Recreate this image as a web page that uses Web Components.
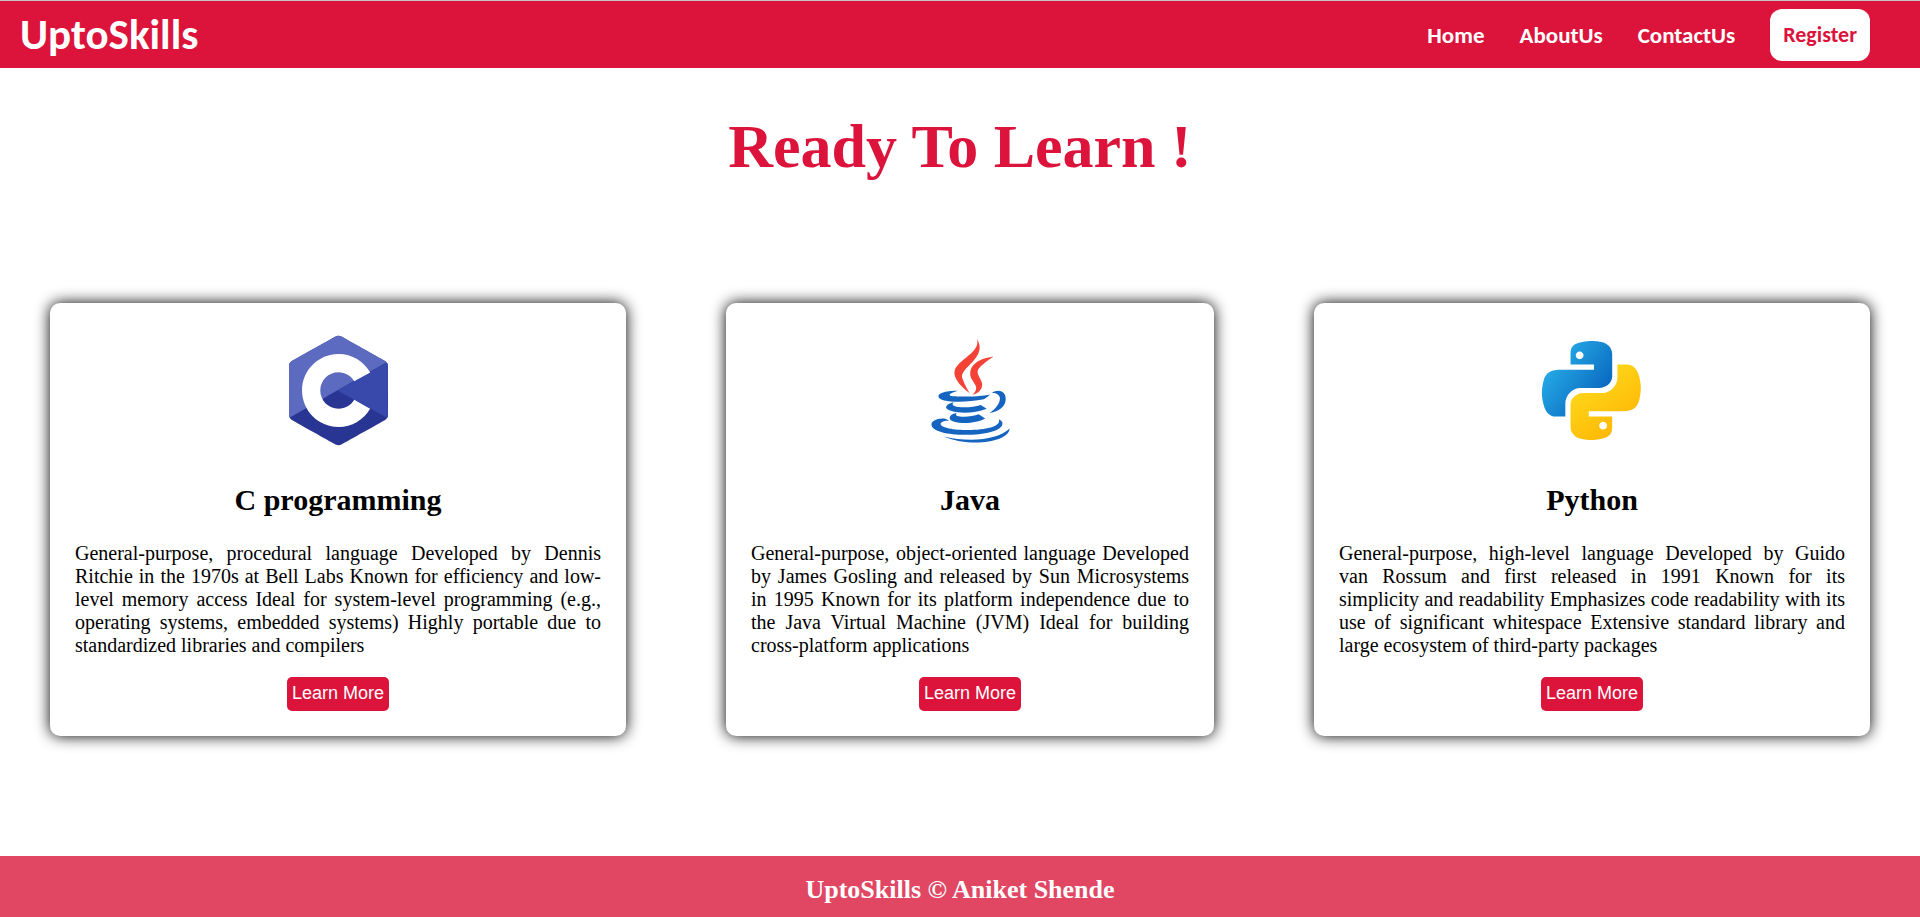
<!DOCTYPE html>
<html lang="en">
<head>
<meta charset="utf-8">
<meta name="viewport" content="width=device-width, initial-scale=1">
<title>UptoSkills</title>
<style>
  body { margin: 0; font-family: "Liberation Serif", "Times New Roman", serif; background: #fff; color: #000; }
</style>
</head>
<body>
<skills-page></skills-page>

<template id="page">
  <style>
    :host { display: flex; flex-direction: column; min-height: 100vh; }
    h1 { margin: 41px 0 120px; font-size: 62px; line-height: 74px; text-align: center; color: #dc143c; }
    main { flex: 1; }
    .cards { display: grid; grid-template-columns: 576fr 488fr 556fr; gap: 100px; margin: 0 50px 120px; }
    @media (max-width: 1000px) { .cards { grid-template-columns: 1fr; gap: 50px; } }
  </style>
  <site-header></site-header>
  <main>
    <h1>Ready To Learn !</h1>
    <div class="cards">
      <course-card>
        <svg slot="icon" viewBox="0 0 48 48" width="125" height="125" aria-hidden="true">
          <path fill="#283593" d="M22.903,3.286c0.679-0.381,1.515-0.381,2.193,0c3.355,1.883,13.451,7.551,16.807,9.434C42.582,13.1,43,13.804,43,14.566c0,3.766,0,15.101,0,18.867c0,0.762-0.418,1.466-1.097,1.847c-3.355,1.883-13.451,7.551-16.807,9.434c-0.679,0.381-1.515,0.381-2.193,0c-3.355-1.883-13.451-7.551-16.807-9.434C5.418,34.899,5,34.196,5,33.434c0-3.766,0-15.101,0-18.867c0-0.762,0.418-1.466,1.097-1.847C9.451,10.837,19.549,5.169,22.903,3.286z"/>
          <path fill="#5c6bc0" d="M5.304,34.404C5.038,34.048,5,33.71,5,33.255c0-3.744,0-15.014,0-18.759c0-0.758,0.417-1.458,1.094-1.836c3.343-1.872,13.405-7.507,16.748-9.38c0.677-0.379,1.594-0.371,2.271,0.008c3.343,1.872,13.371,7.459,16.714,9.331c0.27,0.152,0.476,0.335,0.66,0.576L5.304,34.404z"/>
          <path fill="#3949ab" d="M42.485,13.205c0.516,0.483,0.506,1.211,0.506,1.784c0,3.795-0.032,14.589,0.009,18.384c0.004,0.396-0.127,0.813-0.323,1.127L23.593,24L42.485,13.205z"/>
          <path fill="#fff" fill-rule="evenodd" d="M24,10c5.213,0,9.759,2.856,12.168,7.085l-6.141,3.328C28.82,18.38,26.575,17,24,17c-3.864,0-7,3.136-7,7c0,3.863,3.137,7,7,7c2.57,0,4.817-1.388,6.033-3.452l6.1,3.428C33.703,35.176,29.182,38,24,38c-7.727,0-14-6.273-14-14S16.273,10,24,10z"/>
        </svg>
        <span slot="title">C programming</span>
        General-purpose, procedural language Developed by Dennis Ritchie in the 1970s at Bell Labs Known for efficiency and low-level memory access Ideal for system-level programming (e.g., operating systems, embedded systems) Highly portable due to standardized libraries and compilers
      </course-card>
      <course-card>
        <svg slot="icon" viewBox="0 0 48 48" width="125" height="125" aria-hidden="true">
          <g fill="#f44336">
            <path d="M23.65,24.898c-0.998-1.609-1.722-2.943-2.725-5.455C19.229,15.2,31.24,11.366,26.37,3.999c2.111,5.089-7.577,8.235-8.477,12.473C17.07,20.37,23.645,24.898,23.65,24.898z"/>
            <path d="M23.878,17.27c-0.192,2.516,2.229,3.857,2.299,5.695c0.056,1.496-1.447,2.743-1.447,2.743s2.728-0.536,3.579-2.818c0.945-2.534-1.834-4.269-1.548-6.298c0.267-1.938,6.031-5.543,6.031-5.543S24.311,11.611,23.878,17.27z"/>
          </g>
          <g fill="#1565c0">
            <path d="M32.084 25.055c1.754-.394 3.233.723 3.233 2.01 0 2.901-4.021 5.643-4.021 5.643s6.225-.742 6.225-5.505C37.521 24.053 34.464 23.266 32.084 25.055zM29.129 27.395c0 0 1.941-1.383 2.458-1.902-4.763 1.011-15.638 1.147-15.638.269 0-.809 3.507-1.638 3.507-1.638s-7.773-.112-7.773 2.181C11.683 28.695 21.858 28.866 29.129 27.395z"/>
            <path d="M27.935,29.571c-4.509,1.499-12.814,1.02-10.354-0.993c-1.198,0-2.974,0.963-2.974,1.889c0,1.857,8.982,3.291,15.63,0.572L27.935,29.571z"/>
            <path d="M18.686,32.739c-1.636,0-2.695,1.054-2.695,1.822c0,2.391,9.76,2.632,13.627,0.205l-2.458-1.632C24.271,34.404,17.014,34.579,18.686,32.739z"/>
            <path d="M36.281,36.632c0-0.936-1.055-1.377-1.433-1.588c2.228,5.373-22.317,4.956-22.317,1.784c0-0.721,1.807-1.427,3.477-1.093l-1.42-0.839C11.26,34.374,9,35.837,9,37.017C9,42.52,36.281,42.255,36.281,36.632z"/>
            <path d="M39,38.604c-4.146,4.095-14.659,5.587-25.231,3.057C24.341,46.164,38.95,43.628,39,38.604z"/>
          </g>
        </svg>
        <span slot="title">Java</span>
        General-purpose, object-oriented language Developed by James Gosling and released by Sun Microsystems in 1995 Known for its platform independence due to the Java Virtual Machine (JVM) Ideal for building cross-platform applications
      </course-card>
      <course-card>
        <svg slot="icon" viewBox="0 0 48 48" width="125" height="125" aria-hidden="true">
          <defs>
            <linearGradient id="blue" gradientUnits="userSpaceOnUse" x1="10" y1="10" x2="29" y2="24"><stop offset="0" stop-color="#26abe7"/><stop offset="1" stop-color="#0a69bf"/></linearGradient>
            <linearGradient id="yellow" gradientUnits="userSpaceOnUse" x1="19" y1="20" x2="34" y2="40"><stop offset="0" stop-color="#ffda1c"/><stop offset="1" stop-color="#feb705"/></linearGradient>
          </defs>
          <path fill="url(#blue)" d="M24.047,5c-1.555,0.005-2.633,0.142-3.936,0.367c-3.848,0.67-4.549,2.077-4.549,4.67V14h9v2H15.22h-4.35c-2.636,0-4.943,1.242-5.674,4.219c-0.826,3.417-0.863,5.557,0,9.125C5.851,32.005,7.294,34,9.931,34h3.632v-5.104c0-2.966,2.686-5.896,5.764-5.896h7.236c2.523,0,5-1.862,5-4.377v-8.586c0-2.439-1.759-4.263-4.218-4.672C27.406,5.359,25.589,4.994,24.047,5z M19.063,9c0.821,0,1.5,0.677,1.5,1.502c0,0.833-0.679,1.498-1.5,1.498c-0.837,0-1.5-0.664-1.5-1.498C17.563,9.68,18.226,9,19.063,9z"/>
          <path fill="url(#yellow)" d="M23.078,43c1.555-0.005,2.633-0.142,3.936-0.367c3.848-0.67,4.549-2.077,4.549-4.67V34h-9v-2h9.343h4.35c2.636,0,4.943-1.242,5.674-4.219c0.826-3.417,0.863-5.557,0-9.125C41.274,15.995,39.831,14,37.194,14h-3.632v5.104c0,2.966-2.686,5.896-5.764,5.896h-7.236c-2.523,0-5,1.862-5,4.377v8.586c0,2.439,1.759,4.263,4.218,4.672C19.719,42.641,21.536,43.006,23.078,43z M28.063,39c-0.821,0-1.5-0.677-1.5-1.502c0-0.833,0.679-1.498,1.5-1.498c0.837,0,1.5,0.664,1.5,1.498C29.563,38.32,28.899,39,28.063,39z"/>
        </svg>
        <span slot="title">Python</span>
        General-purpose, high-level language Developed by Guido van Rossum and first released in 1991 Known for its simplicity&nbsp;and readability Emphasizes code readability with its use of significant whitespace Extensive standard library and large ecosystem of third-party packages
      </course-card>
    </div>
  </main>
  <site-footer>UptoSkills © Aniket Shende</site-footer>
</template>

<template id="header">
  <style>
    :host { display: block; font-family: Calibri, Carlito, Lato, sans-serif; }
    header { display: flex; align-items: center; justify-content: space-between; box-sizing: border-box; min-height: 68px; padding: 0 50px 0 20px; border-top: 1px solid #c4c4c4; background: #dc143c; color: #fff; }
    .brand { font-size: 43px; line-height: 52px; font-weight: 700; }
    nav { display: flex; align-items: center; gap: 35px; font-size: 23px; font-weight: 700; }
    a { color: inherit; text-decoration: none; }
    button { padding: 0 13px; height: 52px; border: 0; border-radius: 12px; background: #fff; color: #dc143c; font: inherit; font-size: 22px; }
  </style>
  <header>
    <a class="brand" href="#">UptoSkills</a>
    <nav aria-label="Main">
      <a href="#">Home</a>
      <a href="#">AboutUs</a>
      <a href="#">ContactUs</a>
      <button type="button">Register</button>
    </nav>
  </header>
</template>

<template id="card">
  <style>
    :host { display: block; }
    article { display: flex; flex-direction: column; align-items: center; padding: 25px; border-radius: 10px; background: #fff; box-shadow: 0 0 15px #000; }
    ::slotted(svg) { display: block; }
    h2 { margin: 30px 0 25px; font-size: 30px; line-height: 34px; }
    p { margin: 0 0 20px; font-size: 20px; line-height: 23px; text-align: justify; }
    button { height: 34px; padding: 0 5px 2px; border: 0; border-radius: 5px; background: #dc143c; color: #fff; font: 18px "Liberation Sans", Arial, sans-serif; }
  </style>
  <article>
    <slot name="icon"></slot>
    <h2><slot name="title"></slot></h2>
    <p><slot></slot></p>
    <button type="button">Learn More</button>
  </article>
</template>

<template id="footer">
  <style>
    :host { display: block; }
    footer { padding: 20px 16px 13px; background: #e14663; color: #fff; font-size: 26px; line-height: 28px; font-weight: 700; text-align: center; }
  </style>
  <footer><slot></slot></footer>
</template>

<script>
  const define = (name, templateId) => customElements.define(name, class extends HTMLElement {
    constructor() {
      super();
      this.attachShadow({ mode: "open" })
        .append(document.getElementById(templateId).content.cloneNode(true));
    }
  });
  define("site-header", "header");
  define("course-card", "card");
  define("site-footer", "footer");
  define("skills-page", "page");
</script>
</body>
</html>
